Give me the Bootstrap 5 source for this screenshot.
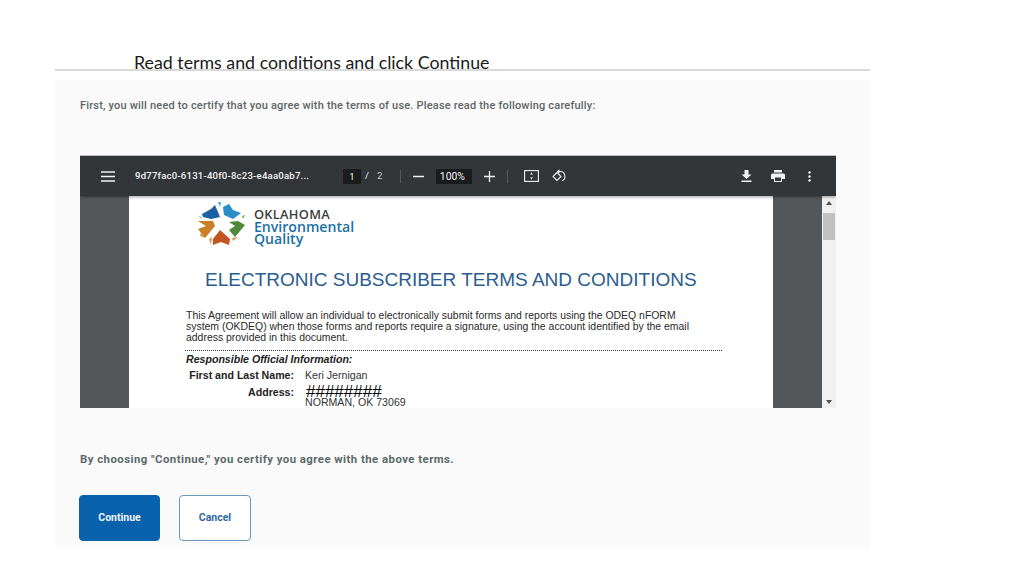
<!DOCTYPE html>
<html lang="en">
<head>
<meta charset="utf-8">
<title>Read terms and conditions</title>
<link href="https://cdn.jsdelivr.net/npm/bootstrap@5.3.0/dist/css/bootstrap.min.css" rel="stylesheet">
<style>
html,body{height:576px;overflow:hidden;background:#fff}
.slide{width:815px;margin-left:55px;padding-top:52px}
.slide-title{font:17.8px/20px Lato,"Liberation Sans",sans-serif;color:#1a1a1a;padding-left:79px;height:17px;margin:0}
.title-rule{height:2px;background:#d9d9d9}
.panel{background:#fafafa;margin-top:9px;height:467px;padding:0 34px 0 25px;font-family:Roboto,"Liberation Sans",sans-serif}
.intro{font-size:11px;line-height:12px;font-weight:500;color:#5e6666;letter-spacing:.19px;padding-top:20px;height:75px;margin:0;white-space:nowrap}
.viewer{height:253px;width:756px;border-top:1px solid #bbb;overflow:hidden}
.vbar{height:40px;background:#323639;color:#f1f1f1;font-size:9.6px;box-shadow:0 1px 3px rgba(0,0,0,.4);position:relative;z-index:1;padding-left:21px}
.vname{width:208px;margin-left:20px;font-weight:500;letter-spacing:.2px;white-space:nowrap}
.pagebox{background:#191b1c;width:18px;height:15px;line-height:15px;text-align:center}
.zoombox{background:#191b1c;width:36px;height:15px;line-height:15px;text-align:center;font-size:10.4px;padding-right:4px}
.vsep{width:1px;height:13px;background:#55595c}
.gap-sep{margin-left:18px}
.gap-tool{margin-left:12px}
.gap-fit{margin-left:16px}
.gap-rot{margin-left:13px}
.gap-print{margin-left:19px}
.gap-dots{margin-left:23px;margin-right:25px}
.page-total{color:#c8c8c8}
.vbody{height:213px}
.gutter{width:49px;background:#53575a;flex:none}
.docpage{width:644px;background:#fff;flex:none;overflow:hidden;font-family:"Liberation Sans",Arial,sans-serif;color:#333;position:relative}
.vscroll{width:14px;background:#f1f1f1;flex:none;position:relative}
.thumb{background:#c1c1c1;height:27px;margin:0 1px}
.arrow-t{width:0;height:0;border:3px solid transparent;border-bottom:4px solid #505050;margin:2px auto 8px}
.arrow-b{width:0;height:0;border:3px solid transparent;border-top:4px solid #505050;position:absolute;bottom:2px;left:4px}
.logo-row{padding:6px 0 0 69px;height:53px}
.logo-text{font-family:"Open Sans","Liberation Sans",sans-serif;font-weight:600;font-size:14.1px;line-height:12.5px;color:#1b70a5;margin-left:9px;padding-top:6px;white-space:nowrap}
.logo-text b{display:block;color:#3d3d3d;font-size:12.8px;font-weight:600;letter-spacing:.3px}
.doc-title{font-size:19px;line-height:20px;color:#2b5d8f;margin:21px 0 0 76px;white-space:nowrap}
.doc-para{font-size:10.45px;line-height:11px;margin:20px 0 0 57px;width:515px;color:#2a2a2a}
.dots{width:537px;margin:7px 0 0 56px;border-top:1px dotted #333;height:0}
.doc-head{font-size:10.6px;line-height:11px;font-weight:700;font-style:italic;margin:3px 0 0 57px;color:#222}
.doc-row{font-size:10.6px;line-height:11px}
.row-name{margin-top:5px}
.row-addr{margin-top:6px}
.row-city{margin-top:-1px}
.doc-label{width:165px;text-align:right;font-weight:700;color:#222;flex:none}
.doc-val{margin-left:11px;color:#333}
.hashes{font:17px/11px "Liberation Sans",sans-serif;color:#000;position:absolute;left:177px;top:190px}
.closing{font-size:11.4px;line-height:12px;font-weight:700;color:#5c6a6a;letter-spacing:.45px;margin:45px 0 0;height:42px;white-space:nowrap}
.act{font-size:10.5px;font-weight:700;border-radius:4px;height:46px;padding:0;font-family:Roboto,"Liberation Sans",sans-serif}
.act-go{width:81px;background:#0a62ad;border:1px solid #0a62ad;color:#eef4fa;margin-left:-1px}
.act-go:hover{background:#0a62ad;color:#eef4fa}
.act-no{width:72px;background:#fff;border:1px solid #6a9cb8;color:#2f6aa3;margin-left:19px}
.act-no:hover{background:#fff;color:#2f6aa3}
</style>
</head>
<body>
<div class="slide">
  <h1 class="slide-title">Read terms and conditions and click Continue</h1>
  <div class="title-rule"></div>
  <div class="panel">
    <p class="intro">First, you will need to certify that you agree with the terms of use. Please read the following carefully:</p>
    <div class="viewer">
      <div class="vbar d-flex align-items-center">
        <svg width="14" height="11" viewBox="0 0 14 11"><path d="M0 1h14M0 5.500h14M0 10h14" stroke="#f1f1f1" stroke-width="1.600"/></svg>
        <div class="vname">9d77fac0-6131-40f0-8c23-e4aa0ab7...</div>
        <div class="pagebox">1</div>
        <span class="ms-1">/</span><span class="ms-2 page-total">2</span>
        <div class="vsep gap-sep"></div>
        <svg class="gap-tool" width="11" height="11" viewBox="0 0 11 11"><path d="M0 5.500h11" stroke="#f1f1f1" stroke-width="1.500"/></svg>
        <div class="zoombox gap-tool">100%</div>
        <svg class="gap-tool" width="11" height="11" viewBox="0 0 11 11"><path d="M0 5.500h11M5.500 0v11" stroke="#f1f1f1" stroke-width="1.300"/></svg>
        <div class="vsep gap-tool"></div>
        <svg class="gap-fit" width="15" height="12" viewBox="0 0 15 12"><rect x=".6" y=".6" width="13.800" height="10.800" fill="none" stroke="#f1f1f1" stroke-width="1.100"/><path d="M7.500 2.500l1.500 2h-3zM7.500 9.500l1.500-2h-3z" fill="#f1f1f1"/></svg>
        <svg class="gap-rot" width="15" height="14" viewBox="0 0 15 14" fill="none" stroke="#f1f1f1" stroke-width="1.100"><path d="M5 3.500L1 7.500l4 4 4-4z"/><path d="M5.500 2.500h2.500a4.800 4.800 0 0 1 2 9.200"/><path d="M7.500.8L5.500 2.500l2 1.700"/></svg>
        <div class="ms-auto d-flex align-items-center">
          <svg width="11" height="12" viewBox="0 0 11 12"><path d="M3.500 0h4v4.500h3L5.500 9 .5 4.500h3zM.5 10.500h10V12H.500z" fill="#f1f1f1"/></svg>
          <svg class="gap-print" width="14" height="12" viewBox="0 0 14 12"><path d="M3 0h8v2.500H3zM1.500 3.500h11A1.500 1.500 0 0 1 14 5v4h-3v3H3V9H0V5a1.500 1.500 0 0 1 1.500-1.500zM4 7.500V11h6V7.500z" fill="#f1f1f1" fill-rule="evenodd"/></svg>
          <svg class="gap-dots" width="3" height="11" viewBox="0 0 3 11"><circle cx="1.500" cy="1.500" r="1.200" fill="#f1f1f1"/><circle cx="1.500" cy="5.500" r="1.200" fill="#f1f1f1"/><circle cx="1.500" cy="9.500" r="1.200" fill="#f1f1f1"/></svg>
        </div>
      </div>
      <div class="vbody d-flex">
        <div class="gutter"></div>
        <div class="docpage">
          <div class="logo-row d-flex">
            <svg width="47" height="44" viewBox="0 0 47 44">
              <path d="M4 12l9-5 4-4 5 12-9 2-8-2z" fill="#1d5fa5"/>
              <path d="M25 5l6-3 4 6 8 3-8 6-9-4z" fill="#2b8dc8"/>
              <path d="M31 20l9-1 7 4-10 12-6-7 6-4z" fill="#4f8a3c"/>
              <path d="M0 19h15l2 5L7 36l-7-9 8-3z" fill="#c97f24"/>
              <path d="M15 37l7-9 10 9-1 6-8-3-8 3z" fill="#c2551f"/>
              <path d="M20 0l3 0-1 5zM0 14l3 1 1 2z" fill="#4aa5cf"/>
              <path d="M44 14l3-1-2 4z" fill="#6fb04a"/>
              <path d="M3 30l4 6-5-2zM11 37l3-2-1 8zM34 36l6-1-5 4z" fill="#d99a55"/>
            </svg>
            <div class="logo-text"><b>OKLAHOMA</b>Environmental<br>Quality</div>
          </div>
          <div class="doc-title">ELECTRONIC SUBSCRIBER TERMS AND CONDITIONS</div>
          <div class="doc-para">This Agreement will allow an individual to electronically submit forms and reports using the ODEQ nFORM system (OKDEQ) when those forms and reports require a signature, using the account identified by the email address provided in this document.</div>
          <div class="dots"></div>
          <div class="doc-head">Responsible Official Information:</div>
          <div class="doc-row row-name d-flex"><div class="doc-label">First and Last Name:</div><div class="doc-val">Keri Jernigan</div></div>
          <div class="doc-row row-addr d-flex"><div class="doc-label">Address:</div></div>
          <div class="doc-row row-city d-flex"><div class="doc-label"></div><div class="doc-val">NORMAN, OK 73069</div></div>
          <div class="hashes">########</div>
        </div>
        <div class="gutter"></div>
        <div class="vscroll"><div class="arrow-t"></div><div class="thumb"></div><div class="arrow-b"></div></div>
      </div>
    </div>
    <p class="closing">By choosing "Continue," you certify you agree with the above terms.</p>
    <div class="d-flex">
      <button type="button" class="btn act act-go">Continue</button>
      <button type="button" class="btn act act-no">Cancel</button>
    </div>
  </div>
</div>
<script src="https://cdn.jsdelivr.net/npm/bootstrap@5.3.0/dist/js/bootstrap.bundle.min.js"></script>
</body>
</html>
